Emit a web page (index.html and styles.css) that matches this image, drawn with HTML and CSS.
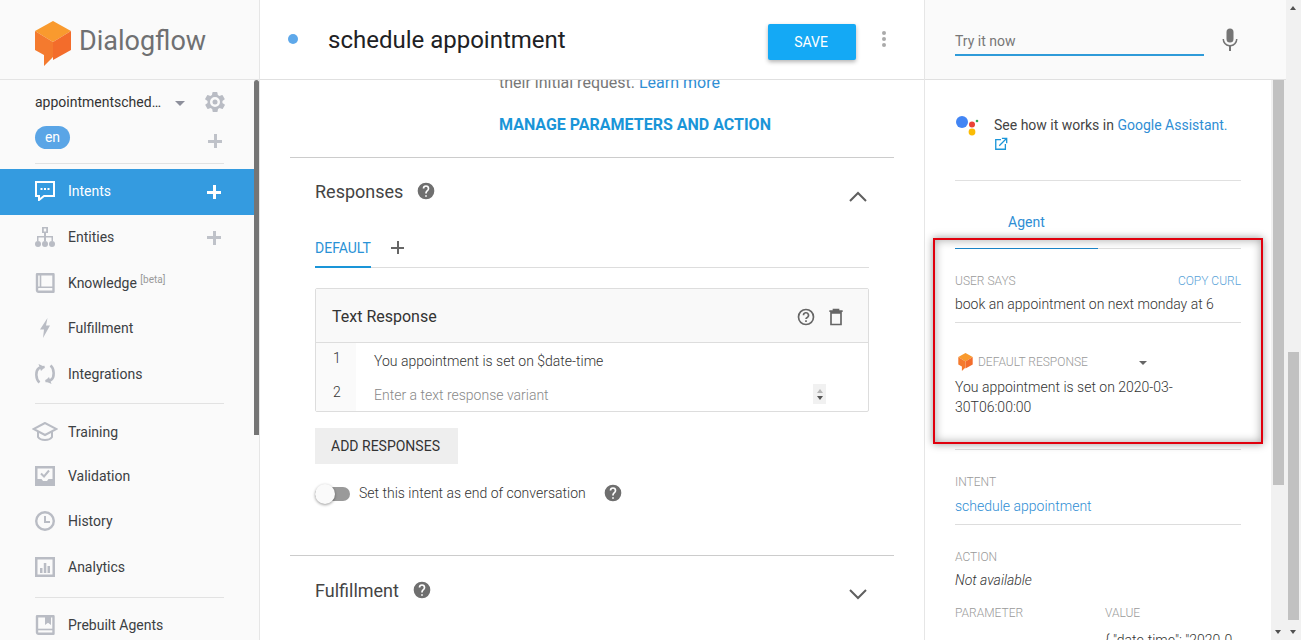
FILE: index.html
```html
<!DOCTYPE html>
<html lang="en">
<head>
    <meta charset="UTF-8">
    <meta name="viewport" content="width=device-width, initial-scale=1.0">
    <title>Dialogflow</title>
    <link rel="stylesheet" href="styles.css">
</head>
<body>

<div class="sidebar">
    <div class="brand">
        <svg class="brand-logo" viewBox="0 0 36 45"><path fill="#f99a2e" d="M18 0 36 10 18 21 0 10z"/><path fill="#f47a2e" d="M0 10 18 21V36L9 45V34L0 29z"/><path fill="#f36c2b" d="M36 10 18 21V39L36 29z"/></svg>
        <span class="brand-name">Dialogflow</span>
    </div>
    <div class="side-body">
        <div class="nav">
            <div class="agent-row">
                <span class="agent-name">appointmentsched…</span>
                <span class="agent-caret"></span>
                <svg class="gear" viewBox="0 0 24 24"><path fill="#b9bcc4" d="M19.400 13a7.500 7.500 0 0 0 0-2l2.100-1.600a.5.5 0 0 0 .1-.7l-2-3.400a.5.5 0 0 0-.6-.2l-2.500 1a7.300 7.300 0 0 0-1.700-1l-.4-2.700a.5.5 0 0 0-.5-.4h-4a.5.5 0 0 0-.5.4l-.4 2.700a7.300 7.300 0 0 0-1.700 1l-2.500-1a.5.5 0 0 0-.6.2l-2 3.400a.5.5 0 0 0 .1.7L4.600 11a7.500 7.500 0 0 0 0 2l-2.100 1.600a.5.5 0 0 0-.1.7l2 3.400c.1.2.4.3.6.2l2.500-1a7.300 7.300 0 0 0 1.700 1l.4 2.700c0 .2.3.4.5.4h4c.2 0 .5-.2.5-.4l.4-2.700a7.300 7.300 0 0 0 1.700-1l2.500 1c.2.1.5 0 .6-.2l2-3.400a.5.5 0 0 0-.1-.7zM12 17a5 5 0 1 1 0-10 5 5 0 0 1 0 10z"/><circle cx="12" cy="12" r="2.500" fill="#b9bcc4"/></svg>
            </div>
            <div class="lang-row">
                <span class="lang">en</span>
                <span class="plus plus-muted lang-plus"></span>
            </div>
            <div class="nav-rule nav-rule-top"></div>

            <div class="nav-item nav-active">
                <svg class="nav-icon" viewBox="0 0 20 20"><path fill="none" stroke="#fff" stroke-width="2" d="M1 1h18v14H9l-5 4v-4H1z"/><path fill="#fff" d="M5.500 7h2v2h-2zm3.500 0h2v2H9zm3.500 0h2v2h-2z"/></svg>
                <span>Intents</span>
                <span class="plus plus-white"></span>
            </div>
            <div class="nav-item">
                <svg class="nav-icon" viewBox="0 0 20 20"><path fill="#b9bcc4" fill-rule="evenodd" d="M7 0h6v6h-2v3h7v5h-1.500v-3.500H11V14H9v-3.500H3.500V14H2V9h7V6H7zm1.800 1.600v2.800h2.400V1.600z"/><circle cx="3" cy="17" r="3" fill="#b9bcc4"/><circle cx="10" cy="17" r="3" fill="#b9bcc4"/><circle cx="17" cy="17" r="3" fill="#b9bcc4"/></svg>
                <span>Entities</span>
                <span class="plus plus-muted"></span>
            </div>
            <div class="nav-item">
                <svg class="nav-icon" viewBox="0 0 20 20"><path fill="none" stroke="#b9bcc4" stroke-width="2.400" stroke-linejoin="round" d="M2 1.200h16.500v17.600H3.500a1.500 1.500 0 0 1-1.500-1.500z"/><path fill="none" stroke="#b9bcc4" stroke-width="1.600" d="M5.500 1.500v12.700h13M2 15.500c0-.8.700-1.300 1.500-1.300h2"/></svg>
                <span>Knowledge <sup class="beta">[beta]</sup></span>
            </div>
            <div class="nav-item">
                <svg class="nav-icon" viewBox="0 0 20 20"><path fill="#b9bcc4" d="M12.500 0 5 11.500h4L8 20l7-12.500h-4z"/></svg>
                <span>Fulfillment</span>
            </div>
            <div class="nav-item">
                <svg class="nav-icon" viewBox="0 0 20 20"><path fill="none" stroke="#b9bcc4" stroke-width="2.600" d="M4.500 18.500C.5 15.500.5 7 3.500 4.500 5 3 7 3 9.500 3M15.500 1.500c4 3 4 11.500 1 14-1.500 1.500-3.500 1.500-6 1.500"/><path fill="#b9bcc4" d="m3.500 0 6.500 3-4 4zm13 20-6.500-3 4-4z"/></svg>
                <span>Integrations</span>
            </div>
            <div class="nav-rule nav-rule-low"></div>

            <div class="nav-item nav-item-short">
                <svg class="nav-icon nav-icon-wide" viewBox="0 0 26 20"><path fill="none" stroke="#b9bcc4" stroke-width="2" d="M13 1 1.500 7 13 13l11.500-6z"/><path fill="none" stroke="#b9bcc4" stroke-width="2" d="M6 10v5c2.500 4 11.500 4 14 0v-5"/></svg>
                <span>Training</span>
            </div>
            <div class="nav-item nav-item-check">
                <svg class="nav-icon" viewBox="0 0 20 20"><path fill="#b9bcc4" fill-rule="evenodd" d="M0 0h20v20H0zm2.500 2.500v10.500h4l1.500 2h4l1.500-2h4V2.500z"/><path fill="none" stroke="#b9bcc4" stroke-width="2" d="m6 7.500 3 3 5-6"/></svg>
                <span>Validation</span>
            </div>
            <div class="nav-item nav-item-mid">
                <svg class="nav-icon" viewBox="0 0 20 20"><circle cx="10" cy="10" r="8.800" fill="none" stroke="#b9bcc4" stroke-width="2.400"/><path fill="none" stroke="#b9bcc4" stroke-width="2" d="M10 5v6h5"/></svg>
                <span>History</span>
            </div>
            <div class="nav-item nav-item-mid">
                <svg class="nav-icon" viewBox="0 0 20 20"><path fill="#b9bcc4" fill-rule="evenodd" d="M0 0h20v20H0zm2.500 2.500v15h15v-15z"/><path fill="#b9bcc4" d="M5 11h2.500v5H5zm3.800-5h2.500v10H8.800zm3.700 3H15v7h-2.500z"/></svg>
                <span>Analytics</span>
            </div>
            <div class="nav-rule nav-rule-last"></div>

            <div class="nav-item">
                <svg class="nav-icon" viewBox="0 0 20 20"><path fill="none" stroke="#b9bcc4" stroke-width="2.400" stroke-linejoin="round" d="M2 1.200h16.500v17.600H3.500a1.500 1.500 0 0 1-1.500-1.500z"/><path fill="none" stroke="#b9bcc4" stroke-width="1.600" d="M2 14.500h16"/><path fill="#b9bcc4" d="M10 1h6v9l-3-2.200L10 10z"/></svg>
                <span>Prebuilt Agents</span>
            </div>
        </div>
        <div class="side-scroll"><div class="side-thumb"></div></div>
    </div>
</div>

<div class="main">
    <div class="main-head">
        <span class="dot"></span>
        <span class="intent-title">schedule appointment</span>
        <button class="save">SAVE</button>
        <span class="kebab"><i></i><i></i><i></i></span>
    </div>
    <div class="main-body">
        <p class="cut-line">their initial request. <a>Learn more</a></p>
        <p class="manage">MANAGE PARAMETERS AND ACTION</p>

        <div class="section responses">
            <div class="section-head">
                <span class="section-title">Responses</span>
                <svg class="help" viewBox="0 0 24 24"><path fill="#6f6f6f" d="M12 2a10 10 0 1 0 0 20 10 10 0 0 0 0-20zm1 17h-2v-2h2zm2.100-7.700-.9.900c-.7.700-1.200 1.300-1.200 2.800h-2v-.5c0-1.100.5-2.100 1.200-2.800l1.200-1.300c.4-.3.600-.8.600-1.400a2 2 0 0 0-4 0H8a4 4 0 0 1 8 0c0 .9-.4 1.700-.9 2.300z"/></svg>
                <svg class="chevron" viewBox="0 0 20 12"><path fill="none" stroke="#5f5f5f" stroke-width="2" d="m2 10 8-8 8 8"/></svg>
            </div>
            <div class="tabs">
                <span class="tab">DEFAULT</span>
                <span class="plus plus-dark"></span>
            </div>
            <div class="card">
                <div class="card-head">
                    <span>Text Response</span>
                    <svg class="card-icon" viewBox="0 0 24 24"><path fill="none" stroke="#666" stroke-width="2" d="M12 3a9 9 0 1 0 0 18 9 9 0 0 0 0-18z"/><path fill="none" stroke="#666" stroke-width="2" d="M9 10a3 3 0 1 1 4.500 2.500c-1 .6-1.500 1-1.500 2"/><path fill="#666" d="M11 16h2v2h-2z"/></svg>
                    <svg class="card-icon" viewBox="0 0 24 24"><path fill="none" stroke="#666" stroke-width="2" d="M6 7h12v14H6zM4 5h16M9 5V3h6v2"/></svg>
                </div>
                <div class="card-row">
                    <span class="row-num">1</span>
                    <span class="row-text">You appointment is set on $date-time</span>
                </div>
                <div class="card-row">
                    <span class="row-num">2</span>
                    <span class="row-text row-hint">Enter a text response variant</span>
                    <span class="spin"><i class="up"></i><i class="down"></i></span>
                </div>
            </div>
            <button class="add">ADD RESPONSES</button>
            <div class="end-row">
                <span class="toggle"><i></i></span>
                <span class="end-text">Set this intent as end of conversation</span>
                <svg class="help" viewBox="0 0 24 24"><path fill="#6f6f6f" d="M12 2a10 10 0 1 0 0 20 10 10 0 0 0 0-20zm1 17h-2v-2h2zm2.100-7.700-.9.900c-.7.700-1.200 1.300-1.200 2.800h-2v-.5c0-1.100.5-2.100 1.200-2.800l1.200-1.300c.4-.3.600-.8.600-1.400a2 2 0 0 0-4 0H8a4 4 0 0 1 8 0c0 .9-.4 1.700-.9 2.300z"/></svg>
            </div>
        </div>

        <div class="section fulfillment">
            <div class="section-head">
                <span class="section-title">Fulfillment</span>
                <svg class="help" viewBox="0 0 24 24"><path fill="#6f6f6f" d="M12 2a10 10 0 1 0 0 20 10 10 0 0 0 0-20zm1 17h-2v-2h2zm2.100-7.700-.9.900c-.7.700-1.200 1.300-1.200 2.800h-2v-.5c0-1.100.5-2.100 1.200-2.800l1.200-1.300c.4-.3.600-.8.600-1.400a2 2 0 0 0-4 0H8a4 4 0 0 1 8 0c0 .9-.4 1.700-.9 2.300z"/></svg>
                <svg class="chevron" viewBox="0 0 20 12"><path fill="none" stroke="#5f5f5f" stroke-width="2" d="m2 2 8 8 8-8"/></svg>
            </div>
        </div>
    </div>
</div>

<div class="console">
    <div class="try-head">
        <span class="try-input">Try it now</span>
        <svg class="mic" viewBox="0 0 24 24"><path fill="#757575" d="M12 14.500a3.500 3.500 0 0 0 3.500-3.500V4a3.500 3.500 0 0 0-7 0v7a3.500 3.500 0 0 0 3.500 3.500z"/><path fill="#757575" d="M18 11a6 6 0 0 1-12 0H4.500a7.500 7.500 0 0 0 6.500 7.400V23h2v-4.600a7.500 7.500 0 0 0 6.500-7.400z"/></svg>
    </div>
    <div class="console-body">
        <div class="console-content">
            <div class="assistant">
                <svg class="assistant-logo" viewBox="0 0 24 20"><circle cx="7" cy="6" r="6" fill="#4285f4"/><circle cx="17" cy="8.500" r="3" fill="#ea4335"/><circle cx="17" cy="16" r="3.400" fill="#fbbc05"/><circle cx="22" cy="5" r="1.300" fill="#34a853"/></svg>
                <p>See how it works in <a>Google Assistant.</a>
                    <svg class="ext" viewBox="0 0 16 16"><path fill="none" stroke="#1a95d8" stroke-width="1.500" d="M8 3H2v11h11V8M6 10l8-8M9 1.500h5.500V7"/></svg>
                </p>
            </div>
            <div class="agent-tab">Agent</div>
            <div class="tab-line"><i></i></div>

            <div class="field-head">
                <span class="label">USER SAYS</span>
                <a class="copy">COPY CURL</a>
            </div>
            <p class="value">book an appointment on next monday at 6</p>
            <div class="rule rule-says"></div>

            <div class="response-head">
                <svg class="mini-logo" viewBox="0 0 36 45"><path fill="#f99a2e" d="M18 0 36 10 18 21 0 10z"/><path fill="#f47a2e" d="M0 10 18 21V36L9 45V34L0 29z"/><path fill="#f36c2b" d="M36 10 18 21V39L36 29z"/></svg>
                <span class="label">DEFAULT RESPONSE</span>
                <span class="mini-caret"></span>
            </div>
            <p class="value value-wrap">You appointment is set on 2020-03-30T06:00:00</p>
            <div class="rule rule-response"></div>

            <div class="label block-label intent-label">INTENT</div>
            <p class="value"><a>schedule appointment</a></p>
            <div class="rule rule-intent"></div>

            <div class="label block-label action-label">ACTION</div>
            <p class="value value-italic">Not available</p>

            <div class="param-head">
                <span class="label">PARAMETER</span>
                <span class="label">VALUE</span>
            </div>
            <p class="value param-value">{ "date-time": "2020-0</p>
        </div>
        <div class="bar">
            <div class="bar-thumb"></div>
            <span class="arrow-down"></span>
        </div>
    </div>
</div>

<div class="page-bar">
    <span class="arrow-up"></span>
    <div class="page-thumb"></div>
    <span class="arrow-down"></span>
</div>

<div class="highlight"></div>

</body>
</html>
```

FILE: styles.css
```css
* {
    box-sizing: border-box;
}

html, body {
    height: 100%;
}

body {
    margin: 0;
    height: 640px;
    overflow: hidden;
    display: flex;
    position: relative;
    font-family: 'Roboto', 'Liberation Sans', sans-serif;
    font-size: 14px;
    color: #333;
    background: #fff;
}

p {
    margin: 0;
}

a {
    color: #2f8ed4;
}

/* sidebar */
.sidebar {
    width: 260px;
    flex: none;
    background: #fafafa;
    border-right: 1px solid #e6e6e6;
    display: flex;
    flex-direction: column;
}

.brand {
    height: 80px;
    flex: none;
    display: flex;
    align-items: center;
    padding: 0 0 0 35px;
    border-bottom: 1px solid #e4e4e4;
}

.brand-logo {
    width: 36px;
    height: 45px;
    margin-top: 7px;
}

.brand-name {
    margin: 3px 0 0 8px;
    font-size: 27px;
    color: #6f7072;
}

.side-body {
    flex: 1;
    display: flex;
    min-height: 0;
}

.nav {
    flex: 1;
    min-width: 0;
    overflow: hidden;
}

.side-scroll {
    width: 5px;
    flex: none;
}

.side-thumb {
    height: 355px;
    background: #757575;
    border-radius: 3px 3px 0 0;
}

.agent-row {
    height: 44px;
    padding: 0 0 1px 35px;
    display: flex;
    align-items: center;
}

.agent-name {
    width: 140px;
    flex: none;
    color: #333;
}

.agent-caret {
    margin: 3px 0 0 0;
    border: 5px solid transparent;
    border-top: 5px solid #8d8f9b;
    border-bottom: 0;
}

.gear {
    width: 24px;
    height: 24px;
    margin-left: 18px;
}

.lang-row {
    height: 39px;
    padding: 2px 0 0 35px;
    display: flex;
    align-items: flex-start;
    justify-content: space-between;
}

.lang {
    width: 35px;
    height: 23px;
    border-radius: 11.500px;
    background: #5aa5e6;
    color: #fff;
    text-align: center;
    line-height: 23px;
    font-size: 14px;
}

.lang-plus {
    margin: 8px 32px 0 0;
}

.plus {
    width: 14px;
    height: 14px;
    flex: none;
    display: inline-block;
    background:
        linear-gradient(var(--plus), var(--plus)) center / 100% var(--thick) no-repeat,
        linear-gradient(var(--plus), var(--plus)) center / var(--thick) 100% no-repeat;
}

.plus-muted {
    --plus: #bfc2c9;
    --thick: 3px;
}

.plus-white {
    --plus: #fff;
    --thick: 3px;
}

.plus-dark {
    --plus: #666;
    --thick: 2px;
    width: 13px;
    height: 13px;
    margin: 17px 0 0 20px;
}

.nav-item .plus {
    margin-top: 2px;
}

.nav-rule {
    height: 1px;
    margin: 0 30px 0 35px;
    background: #e2e2e2;
}

.nav-rule-top {
    margin-bottom: 5px;
}

.nav-rule-low {
    margin-top: 5px;
    margin-bottom: 8px;
}

.nav-rule-last {
    margin-top: 6px;
    margin-bottom: 6px;
}

.nav-item {
    height: 45.700px;
    padding: 0 33px 2px 35px;
    display: flex;
    align-items: center;
    color: #3c4043;
}

.nav-item-short {
    height: 43px;
}

.nav-item-check {
    height: 45px;
}

.nav-item-mid {
    height: 45.400px;
}

.nav-item span:first-of-type {
    flex: 1;
}

.nav-icon {
    width: 20px;
    height: 20px;
    margin-right: 13px;
    flex: none;
}

.nav-icon-wide {
    width: 26px;
    margin: 0 10px 0 -3px;
}

.nav-active {
    height: 46px;
    background: #349be0;
    color: #fff;
}

.beta {
    font-size: 10px;
    color: #999;
    vertical-align: 5px;
    line-height: 0;
}

/* main column */
.main {
    flex: 1;
    min-width: 0;
    display: flex;
    flex-direction: column;
    background: #fff;
    border-right: 1px solid #e6e6e6;
}

.main-head {
    height: 80px;
    flex: none;
    display: flex;
    align-items: center;
    padding: 0 37px 0 28px;
    border-bottom: 1px solid #e0e0e0;
}

.dot {
    width: 10px;
    height: 10px;
    border-radius: 50%;
    background: #5ea8ea;
    margin: 0 30px 2px 0;
}

.intent-title {
    flex: 1;
    font-size: 24px;
    color: #202124;
    margin-top: 1px;
}

.save {
    width: 88px;
    height: 36px;
    margin-top: 5px;
    padding: 0 2px 0 0;
    border: none;
    border-radius: 2px;
    background: #14a9f5;
    color: #fff;
    font: 14px 'Roboto', sans-serif;
    box-shadow: 0 2px 4px rgba(0, 0, 0, 0.3);
}

.kebab {
    width: 6px;
    margin: 0 0 1px 25px;
    display: flex;
    flex-direction: column;
    gap: 2px;
}

.kebab i {
    height: 4px;
    width: 4px;
    margin-left: 1px;
    border-radius: 50%;
    background: #aaa;
}

.main-body {
    flex: 1;
    min-height: 0;
    overflow: hidden;
    padding: 0 30px;
}

.cut-line {
    margin: -7px 0 0 209px;
    font-size: 16px;
    line-height: 20px;
    color: #777;
}

.manage {
    margin: 22px 0 0 209px;
    font-size: 16px;
    line-height: 20px;
    font-weight: 700;
    color: #1a95d8;
}

.section {
    border-top: 1px solid #ccc;
}

.responses {
    margin-top: 22px;
    height: 398px;
    padding: 0 25px;
}

.section-head {
    height: 66px;
    display: flex;
    align-items: center;
}

.section-title {
    font-size: 18px;
    color: #444;
    margin-right: 13px;
}

.help {
    width: 20px;
    height: 20px;
}

.chevron {
    width: 20px;
    height: 12px;
    margin: 12px 1px 0 auto;
}

.tabs {
    height: 44px;
    display: flex;
    align-items: flex-start;
    border-bottom: 1px solid #ddd;
}

.tab {
    height: 44px;
    width: 56px;
    padding-top: 14px;
    line-height: 20px;
    font-size: 14px;
    color: #2a92d6;
    border-bottom: 2px solid #1a95d8;
}

.card {
    margin-top: 20px;
    border: 1px solid #ddd;
    border-radius: 2px;
    height: 124px;
}

.card-head {
    height: 54px;
    padding: 2px 22px 0 16px;
    background: #f9f9f9;
    border-bottom: 1px solid #ddd;
    display: flex;
    align-items: center;
    gap: 10px;
    font-size: 16px;
    color: #333;
}

.card-head span {
    flex: 1;
}

.card-icon {
    width: 20px;
    height: 20px;
}

.card-row {
    height: 34px;
    display: flex;
    align-items: center;
}

.row-num {
    width: 40px;
    height: 100%;
    flex: none;
    padding: 7px 0 0 17px;
    background: #fafafa;
    font-weight: 300;
    color: #333;
}

.row-text {
    margin: 2px 0 0 18px;
    flex: 1;
    font-weight: 300;
    color: #333;
}

.row-hint {
    color: #888;
}

.spin {
    width: 13px;
    height: 20px;
    margin: 0 42px 0 0;
    background: #f1f1f1;
    display: flex;
    flex-direction: column;
    align-items: center;
    justify-content: center;
    gap: 3px;
}

.spin i {
    border: 3.500px solid transparent;
    border-top: 0;
    border-bottom: 4px solid #b5b5b5;
}

.spin .down {
    border-bottom: 0;
    border-top: 4px solid #555;
}

.add {
    display: block;
    margin-top: 16px;
    padding-right: 8px;
    width: 143px;
    height: 36px;
    border: none;
    background: #eee;
    color: #333;
    font: 14px 'Roboto', sans-serif;
}

.end-row {
    margin-top: 17px;
    height: 24px;
    display: flex;
    align-items: center;
}

.toggle {
    width: 35px;
    height: 14px;
    position: relative;
    display: block;
    margin-top: 1px;
    border-radius: 7px;
    background: #9a9a9a;
}

.toggle i {
    position: absolute;
    left: 0;
    top: -3px;
    width: 20px;
    height: 20px;
    border-radius: 50%;
    background: #fafafa;
    box-shadow: 0 1px 3px rgba(0, 0, 0, 0.4);
}

.end-text {
    margin: 0 17px 0 9px;
    font-weight: 300;
    color: #333;
}

.fulfillment {
    padding: 0 25px;
}

.fulfillment .section-head {
    height: 68px;
}

.fulfillment .chevron {
    margin-top: 8px;
}

/* try it now console */
.console {
    width: 361px;
    flex: none;
    display: flex;
    flex-direction: column;
}

.try-head {
    height: 80px;
    flex: none;
    background: #fafafa;
    border-bottom: 1px solid #e0e0e0;
    display: flex;
    align-items: center;
    padding: 0 0 0 30px;
}

.try-input {
    width: 249px;
    height: 26px;
    line-height: 22px;
    border-bottom: 2px solid #2f9bd9;
    color: #777;
    margin-top: 7px;
}

.mic {
    width: 24px;
    height: 24px;
    margin: 0 0 0 14px;
}

.console-body {
    flex: 1;
    min-height: 0;
    display: flex;
}

.console-content {
    flex: 1;
    min-width: 0;
    overflow: hidden;
    padding: 0 30px;
}

.assistant {
    height: 101px;
    padding: 36px 0 0 0;
    border-bottom: 1px solid #e0e0e0;
    display: flex;
}

.assistant-logo {
    width: 24px;
    height: 20px;
    flex: none;
    margin-right: 15px;
}

.assistant p {
    line-height: 19px;
    color: #444;
}

.ext {
    width: 14px;
    height: 14px;
    display: block;
    margin-top: 2px;
}

.agent-tab {
    margin: 32px 0 0 53px;
    line-height: 18px;
    color: #2f8ed4;
}

.tab-line {
    margin-top: 17px;
    height: 1px;
    background: #ddd;
}

.tab-line i {
    display: block;
    width: 143px;
    height: 1px;
    background: #1a85c8;
}

.field-head {
    margin-top: 25px;
    display: flex;
    justify-content: space-between;
}

.label {
    font-size: 12px;
    line-height: 14px;
    font-weight: 300;
    color: #9a9a9a;
}

.copy {
    font-size: 12px;
    line-height: 14px;
    font-weight: 300;
    color: #5aa3d8;
}

.value {
    font-size: 14px;
    line-height: 20px;
    font-weight: 300;
    color: #333;
}

.field-head + .value {
    margin-top: 6px;
}

.rule {
    height: 1px;
    background: #ddd;
}

.rule-says {
    margin-top: 8px;
}

.response-head {
    margin-top: 30px;
    height: 18px;
    padding-left: 3px;
    display: flex;
    align-items: center;
}

.mini-logo {
    width: 15px;
    height: 18px;
    margin-right: 5px;
}

.mini-caret {
    margin: 2px 0 0 51px;
    border: 4px solid transparent;
    border-top: 4px solid #666;
    border-bottom: 0;
}

.value-wrap {
    width: 240px;
    margin-top: 6px;
}

.rule-response {
    margin-top: 32px;
}

.block-label {
    display: block;
}

.intent-label {
    margin-top: 25px;
}

.block-label + .value {
    margin-top: 7px;
}

.rule-intent {
    margin-top: 8px;
}

.action-label {
    margin-top: 25px;
}

.action-label + .value {
    margin-top: 6px;
}

.value-italic {
    font-style: italic;
}

.param-head {
    margin-top: 16px;
    display: flex;
}

.param-head .label:first-child {
    width: 150px;
}

.param-value {
    margin: 10px 0 0 150px;
    white-space: nowrap;
}

.bar {
    width: 15px;
    flex: none;
    background: #f1f1f1;
    padding: 0 2px;
    position: relative;
}

.bar-thumb {
    height: 405px;
    background: #c1c1c1;
}

.arrow-down,
.arrow-up {
    position: absolute;
    left: 4px;
    border: 3.500px solid transparent;
    border-bottom: 0;
    border-top: 4px solid #505050;
}

.bar .arrow-down {
    bottom: 6px;
}

.page-bar {
    width: 15px;
    flex: none;
    background: #f1f1f1;
    position: relative;
}

.page-thumb {
    position: absolute;
    top: 352px;
    left: 2px;
    width: 11px;
    height: 268px;
    background: #c1c1c1;
}

.page-bar .arrow-up {
    top: 6px;
    border-top: 0;
    border-bottom: 4px solid #505050;
}

.page-bar .arrow-down {
    bottom: 6px;
}

/* annotation drawn over the console */
.highlight {
    position: absolute;
    left: 933px;
    top: 238px;
    width: 330px;
    height: 206px;
    border: 2px solid #e0000d;
    box-shadow: 0 0 8px rgba(0, 0, 0, 0.4), inset 0 0 10px rgba(0, 0, 0, 0.35);
}
```
